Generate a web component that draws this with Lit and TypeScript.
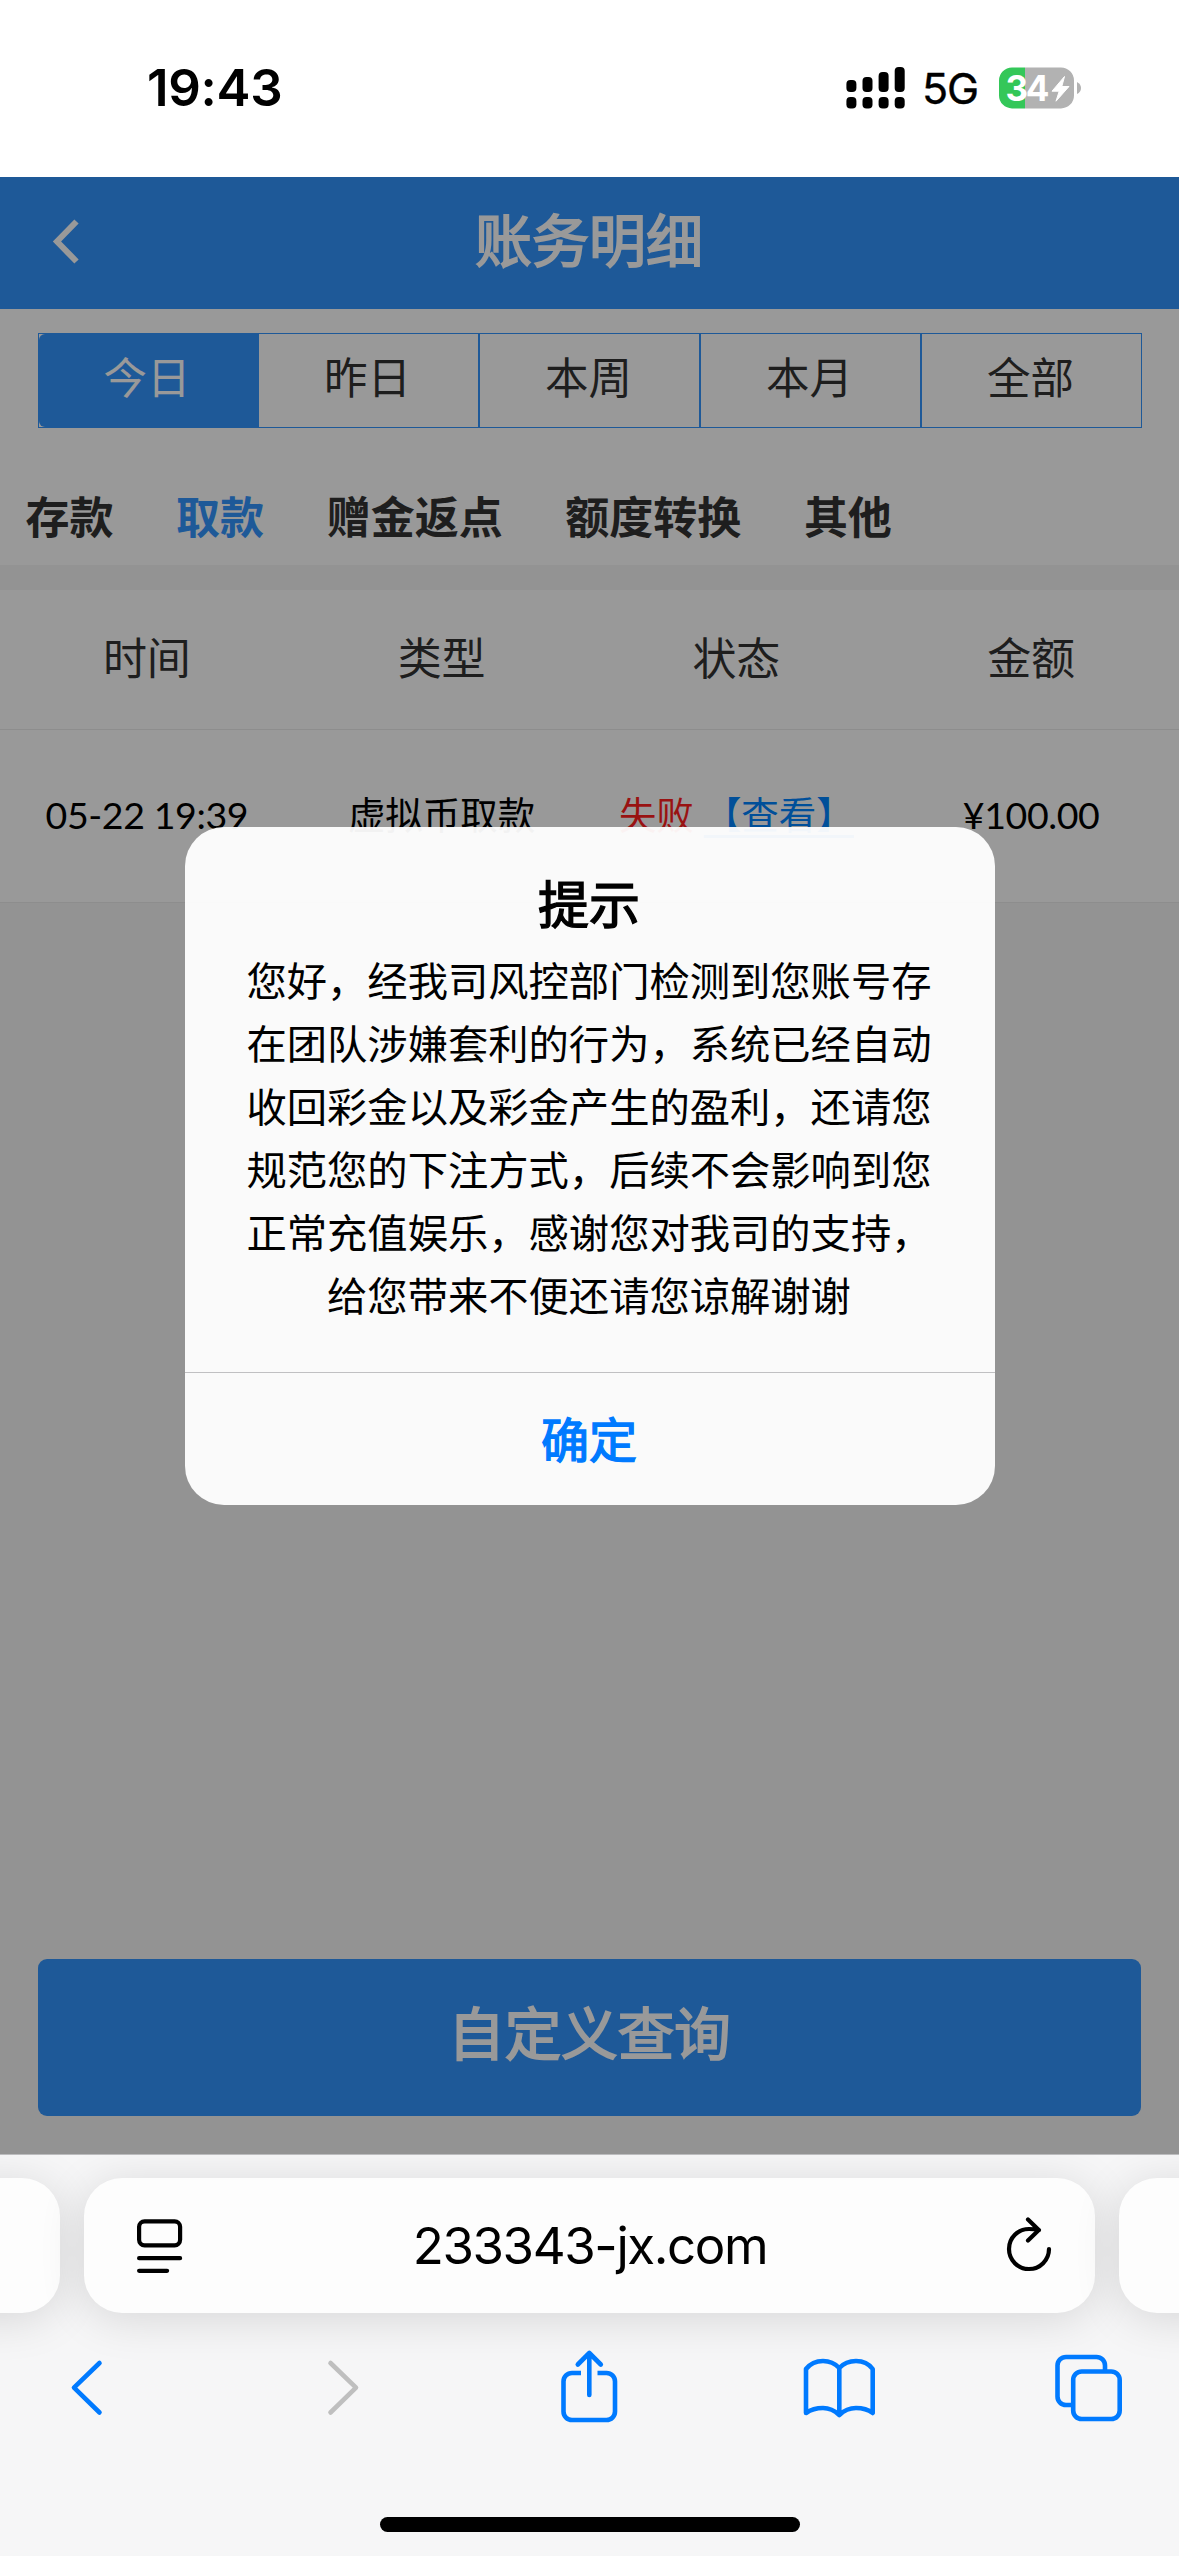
import { LitElement, html, css, svg } from "lit";
import { customElement, state } from "lit/decorators.js";
import { classMap } from "lit/directives/class-map.js";

const CJK = css`"Noto Sans CJK SC", sans-serif`;

@customElement("status-bar")
class StatusBar extends LitElement {
  static styles = css`
    :host {
      display: flex;
      flex: none;
      justify-content: space-between;
      box-sizing: border-box;
      height: 177px;
      padding: 0 96px 0 147px;
      background: #fff;
      color: #000;
      font-family: Inter, sans-serif;
    }
    .time {
      margin-top: 57px;
      font-size: 51px;
      line-height: 62px;
      font-weight: 600;
      letter-spacing: -0.3px;
    }
    .right {
      display: flex;
      margin-top: 60px;
      height: 56px;
      align-items: center;
    }
    .net {
      margin-left: 16px;
      width: 77px;
      font-size: 43px;
      line-height: 60px;
      letter-spacing: -1.2px;
      -webkit-text-stroke: 0.4px #000;
    }
    .pct {
      font-family: Inter, sans-serif;
      font-weight: 700;
      font-size: 35px;
    }
  `;
  render() {
    const tops = [13, 10, 5, 0];
    return html`
      <span class="time">19:43</span>
      <div class="right">
        <svg width="60" height="42" viewBox="0 0 60 42">
          ${tops.map(
            (t, i) => svg`
            <rect x=${i * 16.1 + 0.4} y=${t} width="10" height=${25 - t} rx="4"></rect>
            <rect x=${i * 16.1 + 0.4} y="30" width="10" height="11.5" rx="4"></rect>`
          )}
        </svg>
        <span class="net">5G</span>
        <svg width="84" height="42" viewBox="0 0 84 42">
          <path d="M13 0.4h13v41H13a13 13 0 0 1-13-13v-15a13 13 0 0 1 13-13z" fill="#34c759"></path>
          <path d="M26 0.4h36a13 13 0 0 1 13 13v15a13 13 0 0 1-13 13H26z" fill="#b2b2b2"></path>
          <path d="M78 15q4 2 4 6t-4 6z" fill="#b2b2b2"></path>
          <text class="pct" x="6.5" y="33.5" textLength="44" fill="#fff">34</text>
          <path d="M65.5 9.5L53 24.2h7.2L57 34.2L70 19.5h-7.2z" fill="#fff" stroke="#fff" stroke-width="1" stroke-linejoin="round"></path>
        </svg>
      </div>
    `;
  }
}

@customElement("record-page")
class RecordPage extends LitElement {
  @state() range = 0;
  @state() kind = 1;

  static styles = css`
    :host {
      display: flex;
      flex: 1;
      min-height: 0;
      flex-direction: column;
      position: relative;
      background: #f5f5f5;
      color: #333;
      font-family: ${CJK};
    }
    .head {
      display: grid;
      grid-template-columns: 132px 1fr 132px;
      align-items: center;
      height: 132px;
      background: #3394fe;
      color: #fff;
    }
    .head svg {
      margin: -3px 0 0 52px;
    }
    .title {
      margin-top: -12px;
      text-align: center;
      text-indent: -1px;
      font-size: 57px;
      -webkit-text-stroke: 1.8px #fff;
    }
    .filters {
      background: #fff;
      height: 256px;
      padding: 24px 37px 0 38px;
      box-sizing: border-box;
    }
    .segments {
      display: grid;
      grid-template-columns: 218px repeat(4, 1fr);
      height: 95px;
      box-sizing: border-box;
      border: 1.4px solid #3394fe;
    }
    .segment {
      text-align: center;
      font-size: 43.5px;
      line-height: 83px;
      text-indent: -2px;
      border-left: 2px solid #3394fe;
    }
    .segment:first-child {
      border-left: 0;
    }
    .segment.on {
      background: #3394fe;
      color: #fff;
      border-radius: 6px 0 0 6px;
    }
    .kinds {
      display: flex;
      gap: 62.6px;
      margin: 55px 0 0 -12.5px;
      font-size: 44px;
      line-height: 64px;
      font-weight: 700;
    }
    .kinds .on {
      color: #3394fe;
    }
    .table {
      margin-top: 25px;
      background: #fff;
    }
    .row {
      display: grid;
      grid-template-columns: repeat(4, 1fr);
      text-align: center;
      box-sizing: border-box;
      border-bottom: 1.5px solid #ebebeb;
      text-indent: -1px;
    }
    .names {
      height: 140px;
      font-size: 44px;
      line-height: 132px;
    }
    .entry {
      height: 173px;
      font-family: Lato, ${CJK};
      font-size: 37.5px;
      line-height: 169px;
      color: #000;
      white-space: nowrap;
    }
    .num {
      letter-spacing: -0.4px;
    }
    .fail {
      color: #ff1f1f;
      margin-right: 10px;
    }
    .view {
      color: #0084ff;
      text-decoration: underline;
      text-decoration-thickness: 3px;
      text-underline-offset: 6px;
    }
    .query {
      margin: auto 38px 38px;
      height: 157px;
      border-radius: 9px;
      background: #3394fe;
      color: #fff;
      text-align: center;
      font-size: 56.5px;
      line-height: 143px;
      -webkit-text-stroke: 1.8px #fff;
    }
    .mask {
      position: absolute;
      inset: 0;
      background: rgba(0, 0, 0, 0.4);
    }
    .dialog {
      position: absolute;
      top: 650px;
      left: 185px;
      width: 810px;
      height: 678px;
      display: flex;
      flex-direction: column;
      border-radius: 39px;
      background: rgba(255, 255, 255, 0.95);
      color: #000;
      text-align: center;
      text-indent: -2px;
    }
    .dialog-title {
      margin-top: 38px;
      font-size: 51px;
      line-height: 74px;
      -webkit-text-stroke: 1.4px #000;
    }
    .message {
      flex: 1;
      padding-top: 8px;
      font-size: 40.3px;
      line-height: 63.1px;
      white-space: nowrap;
    }
    .ok {
      height: 132px;
      border-top: 1.5px solid #c0c0c2;
      color: #007aff;
      font-size: 48px;
      line-height: 128px;
      -webkit-text-stroke: 1.4px #007aff;
    }
  `;

  lines = [
    "您好，经我司风控部门检测到您账号存",
    "在团队涉嫌套利的行为，系统已经自动",
    "收回彩金以及彩金产生的盈利，还请您",
    "规范您的下注方式，后续不会影响到您",
    "正常充值娱乐，感谢您对我司的支持，",
    "给您带来不便还请您谅解谢谢",
  ];

  render() {
    return html`
      <div class="head">
        <svg width="30" height="48" viewBox="0 0 30 48">
          <path d="M24.5 3.5L5 23.5L24.5 43.5" fill="none" stroke="#fff" stroke-width="6"></path>
        </svg>
        <div class="title">账务明细</div>
      </div>
      <div class="filters">
        <div class="segments">
          ${["今日", "昨日", "本周", "本月", "全部"].map(
            (t, i) => html`<div
              class=${classMap({ segment: true, on: i === this.range })}
              @click=${() => (this.range = i)}
            >${t}</div>`
          )}
        </div>
        <div class="kinds">
          ${["存款", "取款", "赠金返点", "额度转换", "其他"].map(
            (t, i) => html`<span
              class=${classMap({ on: i === this.kind })}
              @click=${() => (this.kind = i)}
            >${t}</span>`
          )}
        </div>
      </div>
      <div class="table">
        <div class="row names">
          ${["时间", "类型", "状态", "金额"].map((t) => html`<span>${t}</span>`)}
        </div>
        <div class="row entry">
          <span class="num">05-22 19:39</span>
          <span>虚拟币取款</span>
          <span><span class="fail">失败</span><span class="view">【查看】</span></span>
          <span class="num">¥100.00</span>
        </div>
      </div>
      <div class="query">自定义查询</div>
      <div class="mask"></div>
      <div class="dialog">
        <div class="dialog-title">提示</div>
        <div class="message">${this.lines.map((l) => html`<div>${l}</div>`)}</div>
        <div class="ok">确定</div>
      </div>
    `;
  }
}

@customElement("browser-bar")
class BrowserBar extends LitElement {
  static styles = css`
    :host {
      display: flex;
      flex: none;
      flex-direction: column;
      box-sizing: border-box;
      height: 402px;
      overflow: hidden;
      border-top: 1px solid #bcbcbe;
      background: #f6f6f7;
      align-items: center;
    }
    .cards {
      display: flex;
      gap: 24px;
      margin-top: 23px;
      width: 1179px;
      justify-content: center;
    }
    .card {
      flex: none;
      box-sizing: border-box;
      width: 1011px;
      height: 135px;
      border-radius: 38px;
      background: #fdfdfd;
      box-shadow: 0 6px 46px rgba(0, 0, 0, 0.13);
    }
    .address {
      display: flex;
      align-items: center;
      justify-content: space-between;
      padding: 0 39px 0 51px;
    }
    .url {
      margin-left: -7px;
      font-family: Inter, sans-serif;
      font-size: 51px;
      line-height: 60px;
      letter-spacing: -1.4px;
      color: #000;
    }
    .tools {
      display: grid;
      grid-template-columns: 258px 233px 244px 251px 74px;
      box-sizing: border-box;
      width: 1179px;
      margin-top: 34px;
      padding-left: 66px;
    }
    svg {
      fill: none;
      stroke-linecap: round;
      stroke-linejoin: round;
    }
    .tool {
      stroke: #007aff;
      stroke-width: 4.6;
    }
    .off {
      stroke: #bfbfbf;
    }
    .dark {
      stroke: #000;
      stroke-width: 4.2;
    }
    .home {
      margin-top: 90px;
      width: 420px;
      height: 15px;
      border-radius: 8px;
      background: #000;
    }
  `;
  render() {
    return html`
      <div class="cards">
        <div class="card"></div>
        <div class="card address">
          <svg class="dark" width="50" height="60" viewBox="135 2216 50 60">
            <rect x="139.1" y="2221.3" width="41" height="24" rx="5.5"></rect>
            <path d="M139.1 2258.2h41M139.1 2270.8h28"></path>
          </svg>
          <span class="url">233343-jx.com</span>
          <svg class="dark" width="54" height="60" viewBox="1002 2215 54 60">
            <path d="M1049 2248a20 20 0 1 1-20-20q5 0 10 1M1028 2218.5L1038.8 2229L1028 2239.5"></path>
          </svg>
        </div>
        <div class="card"></div>
      </div>
      <div class="tools">
        <svg class="tool" width="40" height="80" viewBox="66 2347 40 80">
          <path d="M99.5 2363L74 2387.7L99.5 2412.5"></path>
        </svg>
        <svg class="tool off" width="40" height="80" viewBox="324 2347 40 80">
          <path d="M330.5 2363L356 2387.7L330.5 2412.5"></path>
        </svg>
        <svg class="tool" width="64" height="80" viewBox="557 2347 64 80">
          <path stroke-linecap="butt" d="M581 2373h-9a8.5 8.5 0 0 0-8.5 8.5v30a8.5 8.5 0 0 0 8.5 8.5h34.5a8.5 8.5 0 0 0 8.5-8.5v-30a8.5 8.5 0 0 0-8.5-8.5h-9"></path>
          <path d="M589.3 2395V2354M577.8 2364.5L589.3 2353L600.8 2364.5"></path>
        </svg>
        <svg class="tool" width="76" height="80" viewBox="801 2347 76 80">
          <path d="M839.3 2368C835 2363.5 829.5 2361 823 2361C816 2361 810 2364 806 2369V2413C811 2409.5 817 2408 823 2408C829.5 2408 834 2410 839.3 2415C844.5 2410 849.5 2408 856 2408C862 2408 868 2409.5 872.7 2413V2369C869 2364 863 2361 856 2361C849.5 2361 843.5 2363.5 839.3 2368V2414"></path>
        </svg>
        <svg class="tool" width="74" height="80" viewBox="1052 2347 74 80">
          <path stroke-linecap="butt" d="M1071 2405h-5a8.5 8.5 0 0 1-8.5-8.5v-31a8.5 8.5 0 0 1 8.5-8.5h30.5a8.5 8.5 0 0 1 8.5 8.5v5"></path>
          <rect x="1073.2" y="2371.5" width="46.5" height="47.5" rx="8.5"></rect>
        </svg>
      </div>
      <div class="home"></div>
    `;
  }
}

@customElement("app-root")
class AppRoot extends LitElement {
  static styles = css`
    :host {
      display: flex;
      flex-direction: column;
      width: 1179px;
      height: 2556px;
      overflow: hidden;
    }
  `;
  render() {
    return html`<status-bar></status-bar><record-page></record-page><browser-bar></browser-bar>`;
  }
}
